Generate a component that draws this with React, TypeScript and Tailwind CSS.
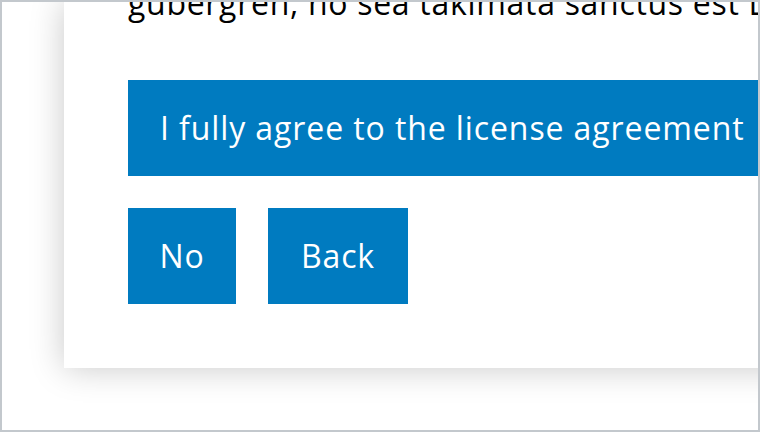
import React from "react";

const font = { fontFamily: '"Open Sans", "Noto Sans", sans-serif' } as React.CSSProperties;

export default function App() {
  return (
    <div
      className="w-[760px] h-[432px] border-2 border-[#c3c8cd] bg-white overflow-hidden flex"
      style={font}
    >
      <div className="ml-[62px] w-[800px] shrink-0 self-start bg-white shadow-[0_0_32px_rgba(0,0,0,0.22)] px-16 pb-16 flex flex-col items-start">
        <p className="-mt-[23px] mb-[53px] text-[32px] leading-[48px] text-black tracking-[0.7px] whitespace-nowrap">
          gubergren, no sea takimata sanctus est Lorem ipsum dolor sit amet.
        </p>
        <button className="bg-[#007bc0] text-white text-[32px] leading-[48px] pl-[32px] pr-8 py-6 tracking-[0.9px] whitespace-nowrap">
          I fully agree to the license agreement
        </button>
        <div className="mt-8 flex gap-8">
          <button className="w-[108px] flex justify-center bg-[#007bc0] text-white text-[32px] leading-[48px] py-6 tracking-[0.9px]">
            No
          </button>
          <button className="w-[140px] flex justify-center bg-[#007bc0] text-white text-[32px] leading-[48px] py-6 tracking-[0.9px]">
            Back
          </button>
        </div>
      </div>
    </div>
  );
}
